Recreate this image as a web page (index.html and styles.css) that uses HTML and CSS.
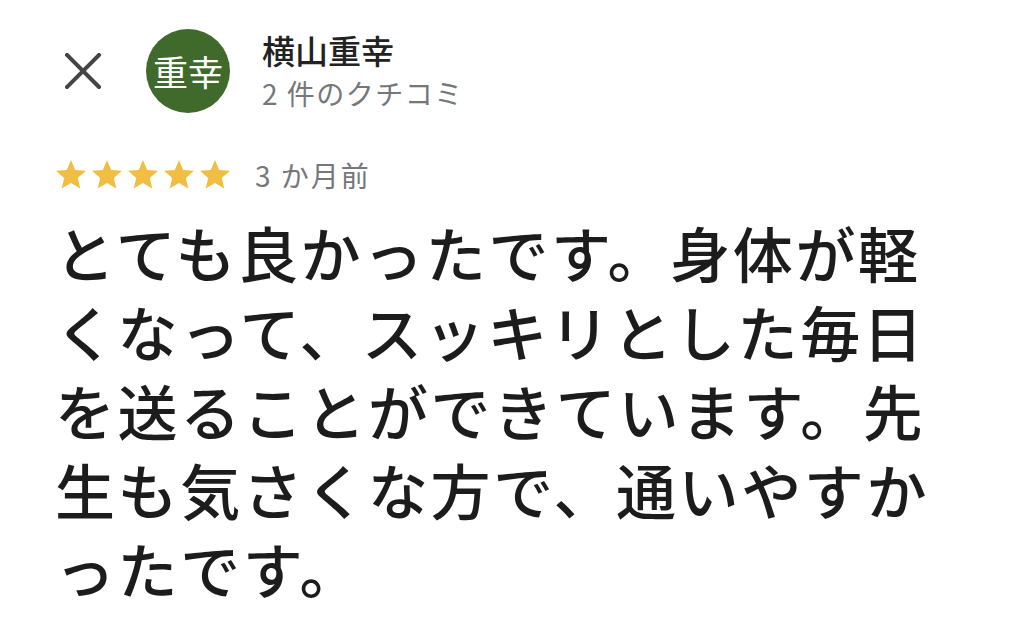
FILE: index.html
```html
<!DOCTYPE html>
<html lang="ja">
<head>
<meta charset="utf-8">
<title>クチコミ</title>
<link rel="stylesheet" href="styles.css">
</head>
<body>
<main class="card">
  <header class="header">
    <button class="close" aria-label="閉じる">
      <svg viewBox="0 0 36 36" width="36" height="36"><path d="M2 2L34 34M34 2L2 34" stroke="#454545" stroke-width="4" stroke-linecap="square" fill="none"/></svg>
    </button>
    <div class="avatar">重幸</div>
    <div class="who">
      <div class="name">横山重幸</div>
      <div class="count">2 件のクチコミ</div>
    </div>
  </header>
  <div class="rating">
    <div class="stars">
      <svg viewBox="0 0 24 24" width="36" height="36"><path d="M12 17.27L18.18 21l-1.64-7.03L22 9.24l-7.19-.61L12 2 9.19 8.63 2 9.24l5.46 4.73L5.82 21z"/></svg>
      <svg viewBox="0 0 24 24" width="36" height="36"><path d="M12 17.27L18.18 21l-1.64-7.03L22 9.24l-7.19-.61L12 2 9.19 8.63 2 9.24l5.46 4.73L5.82 21z"/></svg>
      <svg viewBox="0 0 24 24" width="36" height="36"><path d="M12 17.27L18.18 21l-1.64-7.03L22 9.24l-7.19-.61L12 2 9.19 8.63 2 9.24l5.46 4.73L5.82 21z"/></svg>
      <svg viewBox="0 0 24 24" width="36" height="36"><path d="M12 17.27L18.18 21l-1.64-7.03L22 9.24l-7.19-.61L12 2 9.19 8.63 2 9.24l5.46 4.73L5.82 21z"/></svg>
      <svg viewBox="0 0 24 24" width="36" height="36"><path d="M12 17.27L18.18 21l-1.64-7.03L22 9.24l-7.19-.61L12 2 9.19 8.63 2 9.24l5.46 4.73L5.82 21z"/></svg>
    </div>
    <span class="when">3 か月前</span>
  </div>
  <p class="review">とても良かったです。身体が軽くなって、スッキリとした毎日を送ることができています。先生も気さくな方で、通いやすかったです。</p>
</main>
</body>
</html>
```

FILE: styles.css
```css
html, body {
  margin: 0;
  padding: 0;
  background: #ffffff;
}

body {
  font-family: "Noto Sans CJK JP", "Noto Sans", sans-serif;
  color: #1c1c1c;
}

.card {
  width: 1024px;
  height: 637px;
  padding-top: 29px;
  box-sizing: border-box;
  overflow: hidden;
}

.header {
  display: flex;
  align-items: flex-start;
  padding-left: 65px;
  height: 84px;
}

.close {
  width: 36px;
  height: 36px;
  margin-top: 24px;
  margin-right: 45px;
  padding: 0;
  border: 0;
  background: none;
  display: block;
}

.close svg {
  display: block;
}

.avatar {
  width: 84px;
  height: 84px;
  border-radius: 50%;
  background: #406a2c;
  color: #ffffff;
  font-size: 35px;
  line-height: 84px;
  text-align: center;
  margin-right: 32px;
  flex: none;
}

.who {
  margin-top: 1px;
}

.name {
  font-size: 33px;
  line-height: 40px;
  font-weight: 500;
  color: #222222;
}

.count {
  font-size: 28px;
  line-height: 44px;
  letter-spacing: 1.5px;
  color: #75777a;
  margin-top: 1px;
}

.rating {
  display: flex;
  align-items: center;
  padding-left: 53px;
  margin-top: 44px;
  height: 36px;
}

.stars {
  display: flex;
}

.stars svg {
  display: block;
  fill: #f1bd42;
}

.when {
  margin-left: 22px;
  font-size: 28px;
  line-height: 36px;
  letter-spacing: 2px;
  color: #75777a;
}

.review {
  margin: 19px 0 0 55px;
  width: 900px;
  font-size: 60px;
  line-height: 79px;
  letter-spacing: 2.6px;
  font-weight: 500;
  color: #1c1c1c;
  line-break: loose;
}
```
